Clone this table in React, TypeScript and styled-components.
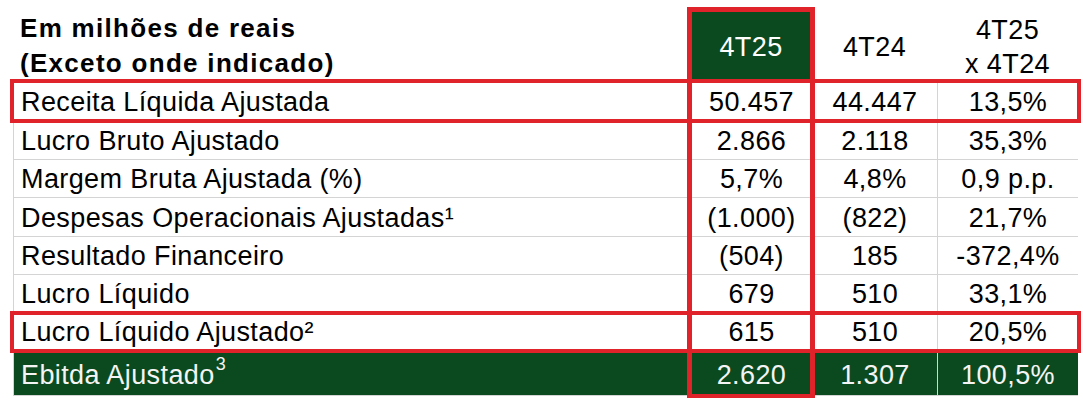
import React from "react";
import styled, { createGlobalStyle } from "styled-components";

const GREEN = "#0b4a1f";
const RED = "#e0232b";
const GRID = "#d4d4d4";

const Global = createGlobalStyle`
  html, body { margin: 0; padding: 0; background: #ffffff; }
  body { font-family: "Liberation Sans", Arial, sans-serif; color: #000; }
`;

const Page = styled.div`
  width: 1083px;
  height: 409px;
  padding: 8px 0 0 13px;
  box-sizing: border-box;
  overflow: hidden;
`;

const Table = styled.div`
  display: grid;
  grid-template-columns: 677px 122px 125px 141px;
  grid-template-rows: 73px 41px 38px 38px 39px 38px 37.5px 39px 44.5px;
  font-size: 27px;
  letter-spacing: 0.4px;
`;

const HeadTitle = styled.div`
  grid-column: 1;
  grid-row: 1;
  font-weight: bold;
  font-size: 26px;
  letter-spacing: 1.3px;
  line-height: 35px;
  padding: 3px 0 0 7px;
`;

const HeadCell = styled.div<{ $col: number; $dark?: boolean }>`
  grid-column: ${(p) => p.$col};
  grid-row: 1;
  display: flex;
  flex-direction: column;
  align-items: center;
  justify-content: center;
  text-align: center;
  line-height: 34px;
  padding-top: 4px;
  background: ${(p) => (p.$dark ? GREEN : "transparent")};
  color: ${(p) => (p.$dark ? "#fff" : "#000")};
`;

const Cell = styled.div<{ $col: number; $row: number; $dark?: boolean; $first?: boolean }>`
  grid-column: ${(p) => p.$col};
  grid-row: ${(p) => p.$row};
  display: flex;
  align-items: center;
  justify-content: ${(p) => (p.$first ? "flex-start" : "center")};
  padding-left: ${(p) => (p.$first ? "7px" : "0")};
  padding-top: ${(p) => (p.$dark ? "5px" : "2px")};
  box-sizing: border-box;
  border-bottom: 1px solid ${GRID};
  border-left: 1px solid ${GRID};
  background: ${(p) => (p.$dark ? GREEN : "#fff")};
  color: ${(p) => (p.$dark ? "#f4f4f4" : "#000")};
  white-space: nowrap;
  &:last-child { border-right: 1px solid ${GRID}; }
`;

const Sup = styled.sup`
  font-size: 18px;
  line-height: 0;
  vertical-align: baseline;
  position: relative;
  top: -12px;
  margin-left: 1px;
`;

const RowBox = styled.div<{ $row: number }>`
  grid-column: 1 / -1;
  grid-row: ${(p) => p.$row};
  margin: -2px -3px -1px -3px;
  border: 4px solid ${RED};
  pointer-events: none;
  z-index: 2;
`;

const ColBox = styled.div`
  grid-column: 2;
  grid-row: 1 / -1;
  margin: -1px -3px -2px -3px;
  border-style: solid;
  border-color: ${RED};
  border-width: 5px 5px 4px 5px;
  pointer-events: none;
  z-index: 3;
`;

type Row = { label: React.ReactNode; a: string; b: string; c: string };

const rows: Row[] = [
  { label: "Receita Líquida Ajustada", a: "50.457", b: "44.447", c: "13,5%" },
  { label: "Lucro Bruto Ajustado", a: "2.866", b: "2.118", c: "35,3%" },
  { label: "Margem Bruta Ajustada (%)", a: "5,7%", b: "4,8%", c: "0,9 p.p." },
  { label: "Despesas Operacionais Ajustadas¹", a: "(1.000)", b: "(822)", c: "21,7%" },
  { label: "Resultado Financeiro", a: "(504)", b: "185", c: "-372,4%" },
  { label: "Lucro Líquido", a: "679", b: "510", c: "33,1%" },
  { label: "Lucro Líquido Ajustado²", a: "615", b: "510", c: "20,5%" },
  {
    label: (
      <>
        Ebitda Ajustado<Sup>3</Sup>
      </>
    ),
    a: "2.620",
    b: "1.307",
    c: "100,5%",
  },
];

export default function App() {
  return (
    <Page>
      <Global />
      <Table>
        <HeadTitle>
          Em milhões de reais
          <br />
          (Exceto onde indicado)
        </HeadTitle>
        <HeadCell $col={2} $dark>
          4T25
        </HeadCell>
        <HeadCell $col={3}>4T24</HeadCell>
        <HeadCell $col={4}>
          <span>4T25</span>
          <span>x 4T24</span>
        </HeadCell>
        {rows.map((r, i) => {
          const row = i + 2;
          const dark = i === rows.length - 1;
          return (
            <React.Fragment key={i}>
              <Cell $col={1} $row={row} $first $dark={dark}>
                {r.label}
              </Cell>
              <Cell $col={2} $row={row} $dark={dark}>
                {r.a}
              </Cell>
              <Cell $col={3} $row={row} $dark={dark}>
                {r.b}
              </Cell>
              <Cell $col={4} $row={row} $dark={dark}>
                {r.c}
              </Cell>
            </React.Fragment>
          );
        })}
        <RowBox $row={2} />
        <RowBox $row={8} />
        <ColBox />
      </Table>
    </Page>
  );
}
